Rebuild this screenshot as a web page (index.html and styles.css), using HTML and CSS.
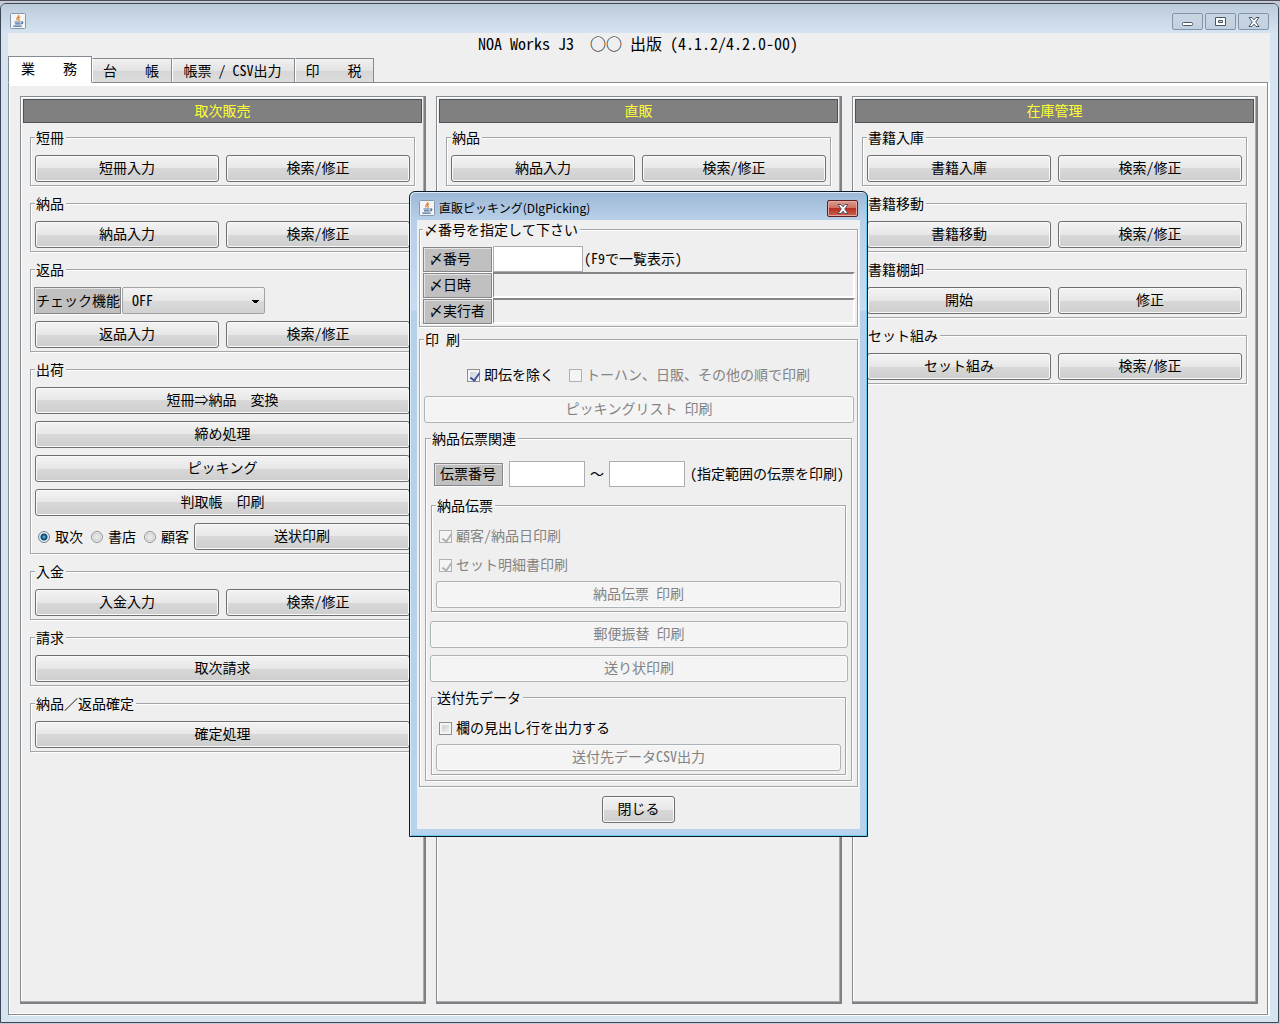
FILE: index.html
```html
<!DOCTYPE html>
<html lang="ja">
<head>
<meta charset="utf-8">
<title>NOA Works J3</title>
<link rel="stylesheet" href="styles.css">
</head>
<body>
<svg class="defs" aria-hidden="true">
  <symbol id="java" viewBox="0 0 16 16">
    <rect x="0.5" y="0.5" width="15" height="15" rx="1" fill="#f3f5f7" stroke="#8497ad"/>
    <path d="M8.600 2c1 1.500-3.200 2.500-1.300 5.300M10.300 3.800c-2 .8-2.200 1.700-1.300 2.600.5.600 0 1-.5 1.400" fill="none" stroke="#e0822b" stroke-width="1.200"/>
    <path d="M4.500 9h6.200M5 10.800h5.200M3.300 13.200h8.400M11.200 9c2.200-.6 2.200 1.500-.5 2" fill="none" stroke="#4a6f98" stroke-width="1.200"/>
  </symbol>
  <symbol id="cross" viewBox="0 0 12 10">
    <path d="M1 .5h3l2 2.300L8 .5h3L7.700 5 11 9.500H8L6 7.200 4 9.500H1L4.300 5z" fill="#fff" stroke="#4b5563"/>
  </symbol>
</svg>

<div class="window">
  <header class="titlebar">
    <svg class="app-icon" aria-hidden="true"><use href="#java"/></svg>
    <div class="window-buttons">
      <button type="button" aria-label="最小化"><svg width="12" height="10"><rect x="0.500" y="5.500" width="10" height="3" rx="1" fill="#fff" stroke="#4b5563"/></svg></button>
      <button type="button" aria-label="最大化"><svg width="12" height="10"><path d="M.5.500h10v8H.5zM3.500 3.500v2h4v-2z" fill="#fff" fill-rule="evenodd" stroke="#4b5563"/></svg></button>
      <button type="button" aria-label="閉じる"><svg width="12" height="10"><use href="#cross"/></svg></button>
    </div>
  </header>

  <main class="client">
    <h1 class="app-title">NOA Works J3　○○ 出版 (4.1.2/4.2.0-00)</h1>
    <div class="tabs" role="tablist">
      <button type="button" role="tab" aria-selected="true" class="tab tab-selected">業　　務</button>
      <button type="button" role="tab" class="tab tab-ledger">台　　帳</button>
      <button type="button" role="tab" class="tab tab-report">帳票 / CSV出力</button>
      <button type="button" role="tab" class="tab">印　　税</button>
    </div>

    <div class="pane">
      <section class="panel">
        <h2 class="panel-title">取次販売</h2>
        <div class="groups">
          <fieldset class="group">
            <legend>短冊</legend>
            <div class="pair"><button type="button" class="btn">短冊入力</button><button type="button" class="btn">検索/修正</button></div>
          </fieldset>
          <fieldset class="group">
            <legend>納品</legend>
            <div class="pair"><button type="button" class="btn">納品入力</button><button type="button" class="btn">検索/修正</button></div>
          </fieldset>
          <fieldset class="group">
            <legend>返品</legend>
            <div class="check-row">
              <label class="tag" for="check-mode">チェック機能</label>
              <select id="check-mode" class="combo"><option>OFF</option></select>
            </div>
            <div class="pair"><button type="button" class="btn">返品入力</button><button type="button" class="btn">検索/修正</button></div>
          </fieldset>
          <fieldset class="group">
            <legend>出荷</legend>
            <button type="button" class="btn">短冊⇒納品　変換</button>
            <button type="button" class="btn">締め処理</button>
            <button type="button" class="btn">ピッキング</button>
            <button type="button" class="btn">判取帳　印刷</button>
            <div class="radio-row">
              <label><input type="radio" name="target" checked>取次</label>
              <label><input type="radio" name="target">書店</label>
              <label><input type="radio" name="target">顧客</label>
              <button type="button" class="btn">送状印刷</button>
            </div>
          </fieldset>
          <fieldset class="group">
            <legend>入金</legend>
            <div class="pair"><button type="button" class="btn">入金入力</button><button type="button" class="btn">検索/修正</button></div>
          </fieldset>
          <fieldset class="group">
            <legend>請求</legend>
            <button type="button" class="btn">取次請求</button>
          </fieldset>
          <fieldset class="group">
            <legend>納品／返品確定</legend>
            <button type="button" class="btn">確定処理</button>
          </fieldset>
        </div>
      </section>

      <section class="panel">
        <h2 class="panel-title">直販</h2>
        <div class="groups">
          <fieldset class="group">
            <legend>納品</legend>
            <div class="pair"><button type="button" class="btn">納品入力</button><button type="button" class="btn">検索/修正</button></div>
          </fieldset>
        </div>
      </section>

      <section class="panel">
        <h2 class="panel-title">在庫管理</h2>
        <div class="groups">
          <fieldset class="group">
            <legend>書籍入庫</legend>
            <div class="pair"><button type="button" class="btn">書籍入庫</button><button type="button" class="btn">検索/修正</button></div>
          </fieldset>
          <fieldset class="group">
            <legend>書籍移動</legend>
            <div class="pair"><button type="button" class="btn">書籍移動</button><button type="button" class="btn">検索/修正</button></div>
          </fieldset>
          <fieldset class="group">
            <legend>書籍棚卸</legend>
            <div class="pair"><button type="button" class="btn">開始</button><button type="button" class="btn">修正</button></div>
          </fieldset>
          <fieldset class="group">
            <legend>セット組み</legend>
            <div class="pair"><button type="button" class="btn">セット組み</button><button type="button" class="btn">検索/修正</button></div>
          </fieldset>
        </div>
      </section>
    </div>
  </main>

  <div class="dialog" role="dialog" aria-labelledby="dialog-title">
    <header class="dialog-bar">
      <svg class="app-icon" aria-hidden="true"><use href="#java"/></svg>
      <h2 id="dialog-title">直販ピッキング(DlgPicking)</h2>
      <button type="button" class="dialog-x" aria-label="閉じる"><svg width="12" height="10"><use href="#cross"/></svg></button>
    </header>
    <div class="dialog-body">
      <fieldset class="group group-number">
        <legend>〆番号を指定して下さい</legend>
        <div class="field-row">
          <label class="tag" for="close-no">〆番号</label>
          <input type="text" id="close-no" class="text">
          <span>(F9で一覧表示)</span>
        </div>
        <div class="field-row">
          <label class="tag" for="close-date">〆日時</label>
          <output id="close-date" class="sunken"></output>
        </div>
        <div class="field-row">
          <label class="tag" for="close-user">〆実行者</label>
          <output id="close-user" class="sunken"></output>
        </div>
      </fieldset>

      <fieldset class="group group-print">
        <legend>印 刷</legend>
        <div class="options">
          <label class="check"><input type="checkbox" checked>即伝を除く</label>
          <label class="check off"><input type="checkbox" disabled>トーハン、日販、その他の順で印刷</label>
        </div>
        <button type="button" class="btn" disabled>ピッキングリスト 印刷</button>

        <fieldset class="group group-slip">
          <legend>納品伝票関連</legend>
          <div class="range">
            <label class="tag" for="slip-from">伝票番号</label>
            <input type="text" id="slip-from" class="text">
            <span>～</span>
            <input type="text" class="text" aria-label="伝票番号 終了">
            <span>(指定範囲の伝票を印刷)</span>
          </div>
          <fieldset class="group group-inner">
            <legend>納品伝票</legend>
            <label class="check off"><input type="checkbox" checked disabled>顧客/納品日印刷</label>
            <label class="check off"><input type="checkbox" checked disabled>セット明細書印刷</label>
            <button type="button" class="btn" disabled>納品伝票 印刷</button>
          </fieldset>
          <div class="stack">
            <button type="button" class="btn" disabled>郵便振替 印刷</button>
            <button type="button" class="btn" disabled>送り状印刷</button>
          </div>
          <fieldset class="group group-inner">
            <legend>送付先データ</legend>
            <label class="check"><input type="checkbox">欄の見出し行を出力する</label>
            <button type="button" class="btn" disabled>送付先データCSV出力</button>
          </fieldset>
        </fieldset>
      </fieldset>
      <button type="button" class="btn btn-close">閉じる</button>
    </div>
  </div>
</div>
</body>
</html>
```
FILE: styles.css
```css
* { box-sizing: border-box; }

body {
  margin: 0;
  min-height: 100vh;
  padding: 2px 1px 1px 0;
  display: flex;
  flex-direction: column;
  background: #c3c9d5;
  border-top: 1px solid #4b4c5c;
  color: #000;
  font: 300 14px/18px "Noto Sans Mono CJK JP", "Noto Sans CJK JP", sans-serif;
}

button, input, select { font: inherit; color: inherit; margin: 0; }
h1, h2 { margin: 0; font-weight: inherit; }
.defs { position: absolute; width: 0; height: 0; }

/* Main window */
.window {
  position: relative;
  flex: 1;
  display: flex;
  flex-direction: column;
  padding: 0 8px 7px 7px;
  border: 1px solid #3c4654;
  border-radius: 6px 6px 0 0;
  background: #d6e4f1;
}

.titlebar {
  display: flex;
  justify-content: space-between;
  align-items: flex-start;
  height: 29px;
  margin: 0 -8px 0 -7px;
  padding: 9px 9px 0;
  border-radius: 5px 5px 0 0;
  background: linear-gradient(#bccbda, #d6e4f1);
}

.app-icon { width: 16px; height: 16px; flex: none; }

.window-buttons { display: flex; gap: 2px; }

.window-buttons button {
  display: flex;
  align-items: center;
  justify-content: center;
  width: 31px;
  height: 17px;
  padding: 0;
  border: 1px solid #8395ab;
  border-radius: 2px;
  background: linear-gradient(#c9d6e4, #c1d0e0);
}

.client {
  flex: 1;
  display: flex;
  flex-direction: column;
  background: #efefef;
}

.app-title {
  height: 23px;
  padding-right: 2px;
  font-size: 16px;
  line-height: 20px;
  text-align: center;
  white-space: pre;
}

/* Tabs */
.tabs { display: flex; align-items: flex-end; height: 27px; margin-bottom: -1px; }

.tab {
  height: 25px;
  width: 79px;
  padding: 0 2px 2px 0;
  border: 1px solid #848b93;
  border-left-color: #fff;
  background: linear-gradient(#f0f0f0, #e3e3e3 50%, #d6d6d6 50%, #dcdcdc);
  white-space: pre;
}

.tab-ledger { width: 80px; }
.tab-report { width: 123px; }

.tab-selected {
  position: relative;
  width: 84px;
  height: 27px;
  padding-bottom: 4px;
  border-left-color: #848b93;
  border-bottom-color: #fff;
  background: #fff;
}

.pane {
  flex: 1;
  display: grid;
  grid-template-columns: repeat(3, 1fr);
  gap: 10px;
  margin-right: 2px;
  padding: 13px 9px 10px 11px;
  border: 1px solid #848b93;
  box-shadow: inset 1px 3px #fff, inset 0 -1px #fff, 2px 1px #fff;
}

/* Category panels */
.panel {
  padding: 2px 1px 0 2px;
  border: 1px solid #848b93;
  border-right: 2px solid #7f7f84;
  border-bottom: 2px solid #7f7f84;
  box-shadow: inset -1px -1px #acacb0, inset 1px 1px #fff;
}

.panel-title {
  height: 24px;
  margin-right: 1px;
  border: 1px solid #4f5254;
  background: #808080;
  color: #ff3;
  font-size: 14px;
  line-height: 20px;
  text-align: center;
}

.groups {
  display: flex;
  flex-direction: column;
  gap: 8px;
  padding: 5px 8px 5px 7px;
}

/* Titled groups */
.group {
  display: flex;
  flex-direction: column;
  gap: 7px;
  min-width: 0;
  margin: 0;
  padding: 9px 4px 3px;
  border: 1px solid #a3a6a8;
  box-shadow: 1px 1px #fff, inset 1px 1px #fff;
}

.group > legend {
  height: 18px;
  padding: 0 2px 0 1px;
  background: #efefef;
  line-height: 18px;
}

.pair { display: grid; grid-template-columns: 1fr 1fr; gap: 7px; }

.btn {
  height: 27px;
  padding: 0 12px 3px;
  border: 1px solid #6d6f71;
  border-radius: 3px;
  background: linear-gradient(#f3f3f3, #e7e7e7 50%, #d8d8d8 50%, #cecece);
  box-shadow: inset 0 0 0 1px #fafafa;
  line-height: 22px;
  white-space: pre;
}

.btn:disabled {
  border-color: #adb2b5;
  background: #f4f4f4;
  color: #838383;
}

.tag {
  display: flex;
  align-items: center;
  padding-bottom: 2px;
  border: 1px solid #85858a;
  background: #c0c0c0;
  box-shadow: inset 1px 1px #e4e4e4, 1px 1px #fff;
  white-space: pre;
}

.check-row { display: flex; gap: 1px; height: 27px; margin-left: -1px; }
.check-row .tag { width: 87px; padding-left: 1px; }

/* Two small triangles meet to form the down arrow */
.combo {
  appearance: none;
  width: 143px;
  padding: 0 0 2px 9px;
  border: 1px solid #a0a3a6;
  border-radius: 2px;
  background:
    linear-gradient(to bottom right, #000 50%, transparent 50%) right 4px top 12px / 4px 4px no-repeat,
    linear-gradient(to bottom left, #000 50%, transparent 50%) right 8px top 12px / 4px 4px no-repeat,
    linear-gradient(#f3f3f3, #e7e7e7 50%, #dadada 50%, #d2d2d2);
}

.radio-row { display: flex; align-items: center; gap: 8px; padding-left: 3px; }
.radio-row label { display: flex; align-items: center; gap: 5px; padding-bottom: 2px; }
.radio-row .btn { flex: 1; margin-left: -3px; }

input[type="radio"] {
  appearance: none;
  width: 12px;
  height: 12px;
  margin-top: 2px;
  border: 1px solid #8e8f8f;
  border-radius: 50%;
  background: radial-gradient(#e6e6e6 30%, #cfd1d3 60%, #f7f7f7 65%);
}

input[type="radio"]:checked {
  border-color: #6b7f93;
  background: radial-gradient(circle at 5px 5px, #6cc4ee 0, #16648f 2px, #123f60 3px, #e9eef2 4px);
}

input[type="checkbox"] {
  appearance: none;
  width: 13px;
  height: 13px;
  margin-top: 2px;
  border: 1px solid #8e8f8f;
  background: linear-gradient(135deg, #c4c8ce, #f5f5f5);
  box-shadow: inset 0 0 0 2px #f4f4f4;
}

input[type="checkbox"]:checked { position: relative; }

input[type="checkbox"]:checked::after {
  content: "";
  position: absolute;
  left: 4px;
  top: 1px;
  width: 4px;
  height: 8px;
  border: solid #42569c;
  border-width: 0 2px 2px 0;
  transform: rotate(35deg);
}

input[type="checkbox"]:disabled { border-color: #b1b1b1; background: #f4f4f4; }
input[type="checkbox"]:disabled::after { border-color: #b3b3b3; }

.text {
  border: 1px solid #abadb3;
  background: #fff;
  padding: 0 3px;
  min-width: 0;
}

/* Picking dialog, floating over the window */
.dialog {
  position: absolute;
  top: 187px;
  left: 0;
  right: 2px;
  width: 459px;
  margin: 0 auto;
  padding: 0 7px 7px;
  border: 1px solid #0c1c26;
  border-radius: 6px 6px 0 0;
  background: linear-gradient(#9db8d6, #b8cfe8 28px, #c6dcf1 118px, #b7d0ea 119px, #b7d2ec);
  box-shadow: inset 1px 1px #dcebf8, inset -1px -1px #62cdec;
}

.dialog-bar { display: flex; align-items: flex-start; height: 28px; padding: 8px 2px 0; }
.dialog-bar h2 { flex: 1; margin-left: 4px; font: 12px/16px "Noto Sans CJK JP", sans-serif; }

.dialog-x {
  display: flex;
  align-items: center;
  justify-content: center;
  width: 31px;
  height: 17px;
  padding: 0;
  border: 1px solid #5b1f24;
  border-radius: 2px;
  background: linear-gradient(#dd9b90, #cf6c5e 50%, #b5301f 50%, #cd6150);
  box-shadow: inset 0 0 0 1px #e2a9a0;
}

.dialog-body {
  display: flex;
  flex-direction: column;
  gap: 3px;
  padding: 0 2px 6px;
  background: #efefef;
}

.group-number { gap: 0; padding: 8px 2px 2px 3px; }
.field-row { display: flex; height: 26px; gap: 1px; align-items: center; }
.field-row span { padding-bottom: 2px; }
.field-row .tag { width: 69px; height: 25px; padding-left: 5px; }
.field-row .text { width: 90px; height: 26px; }

.sunken {
  flex: 1;
  height: 26px;
  border: 1px solid #fff;
  border-width: 2px 2px 2px 1px;
  border-top-color: #85858a;
  border-left-color: #85858a;
}

.group-print { gap: 6px; padding: 15px 3px 5px 4px; }

.options { display: flex; justify-content: center; gap: 15px; height: 24px; margin-bottom: 3px; padding-right: 1px; }
.check { display: flex; align-items: center; gap: 4px; padding-bottom: 2px; white-space: pre; }
.off { color: #838383; }

.group-slip { gap: 0; margin: 0 2px 0 1px; padding: 14px 5px 5px; }
.range { display: flex; align-items: center; gap: 6px; height: 26px; padding-left: 3px; margin-bottom: 9px; }
.range .tag { width: 69px; height: 23px; padding-left: 5px; }
.range .text { width: 76px; height: 26px; }
.range span { margin: 0 -1px; padding-bottom: 2px; white-space: pre; }

.group-inner { gap: 6px; padding-top: 11px; }
.group-inner .check { height: 22px; padding-left: 3px; }
.group-inner .check + .check { margin-top: 1px; }
.group-inner .check + .btn { margin-top: -1px; }

.stack { display: flex; flex-direction: column; gap: 7px; margin: 9px -2px 6px -1px; }

.btn-close { align-self: center; width: 73px; margin-top: 6px; }
```
